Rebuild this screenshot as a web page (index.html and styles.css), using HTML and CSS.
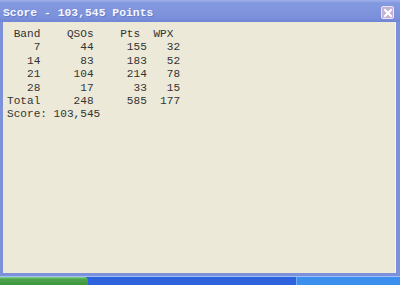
FILE: index.html
```html
<!DOCTYPE html>
<html lang="en">
<head>
    <meta charset="UTF-8">
    <title>Score - 103,545 Points</title>
    <link rel="stylesheet" href="styles.css">
</head>
<body>
    <div class="window">
        <div class="titlebar">
            <span class="title">Score - 103,545 Points</span>
            <button class="close">
                <svg width="10" height="10" viewBox="0 0 10 10">
                    <path d="M2 2 L8 8 M8 2 L2 8" stroke="#fff" stroke-width="2" stroke-linecap="square"/>
                </svg>
            </button>
        </div>
        <div class="client">
<pre class="score"> Band    QSOs    Pts  WPX
    7      44     155   32
   14      83     183   52
   21     104     214   78
   28      17      33   15
Total     248     585  177
Score: 103,545</pre>
        </div>
    </div>
    <div class="taskbar">
        <div class="start"></div>
        <div class="tray"></div>
    </div>
</body>
</html>
```

FILE: styles.css
```css
body {
    margin: 0;
    padding: 0;
    width: 400px;
    height: 285px;
    overflow: hidden;
    background: #7b8fd9;
}
.window {
    display: flex;
    flex-direction: column;
    height: 276px;
    background: #7d91da;
}
.titlebar {
    height: 22px;
    display: flex;
    align-items: center;
    justify-content: space-between;
    padding: 0 6px 0 3px;
    background: linear-gradient(#9fb1ec 0px, #8399df 3px, #7b90db 18px, #7186d2 22px);
}
.title {
    font-family: "Liberation Mono", "Courier New", monospace;
    font-weight: bold;
    font-size: 11.4px;
    color: #f4f6ff;
    text-shadow: 1px 1px 0 #6a7cc4;
    margin-top: 3px;
}
.close {
    width: 13px;
    height: 13px;
    padding: 0;
    margin-top: 3px;
    border: 1px solid #e8e4f4;
    border-radius: 2px;
    background: #c4b2d6;
    display: flex;
    align-items: center;
    justify-content: center;
}
.client {
    flex: 1;
    margin: 0 4px 3px 3px;
    background: #ece9d8;
    border-right: 1px solid #f6f4ee;
}
.score {
    margin: 0;
    padding: 6px 0 0 4px;
    font-family: "Liberation Mono", "Courier New", monospace;
    font-size: 11.1px;
    line-height: 13.4px;
    color: #333;
}
.taskbar {
    display: flex;
    height: 9px;
    border-top: 1px solid #9ec0f8;
    background: #2f63de;
}
.start {
    width: 88px;
    background: linear-gradient(#8fd48f 0px, #4ea64e 2px, #3c963c 8px);
    border-radius: 0 4px 0 0;
}
.tray {
    margin-left: auto;
    width: 103px;
    background: #3c8fec;
    border-left: 1px solid #6fb0f5;
}
```
